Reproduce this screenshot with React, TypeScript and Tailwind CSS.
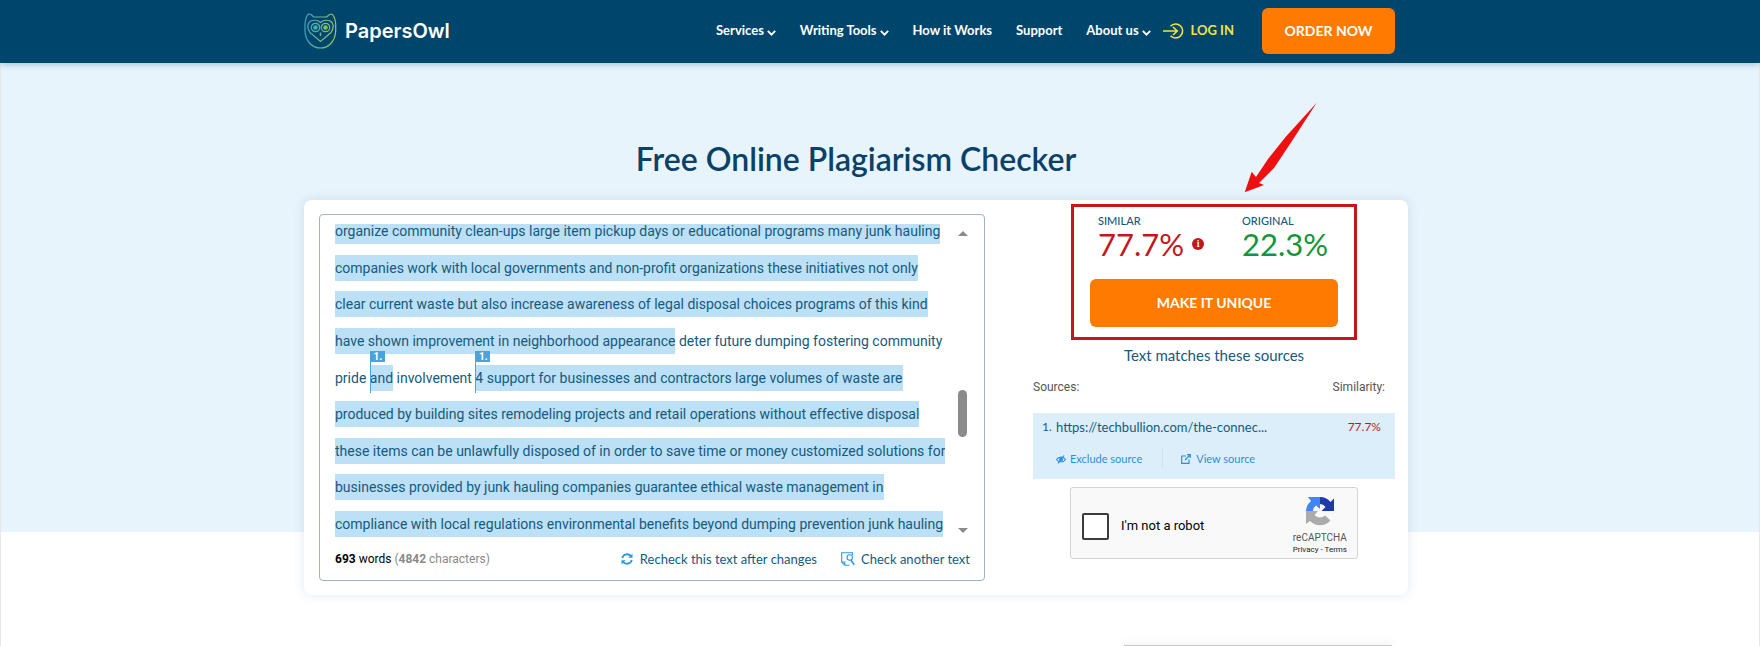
import type { ReactNode } from "react"

const navLinks = [
  { label: "Services", menu: true },
  { label: "Writing Tools", menu: true },
  { label: "How it Works", menu: false },
  { label: "Support", menu: false },
  { label: "About us", menu: true },
]

function OwlLogo() {
  return (
    <svg width="34" height="36" viewBox="0 0 34 36" fill="none" stroke="url(#owl)" strokeWidth="1.2" aria-hidden="true">
      <defs>
        <linearGradient id="owl" x1="0" y1="0" x2="34" y2="0" gradientUnits="userSpaceOnUse">
          <stop offset="0" stopColor="#3fa0c4" />
          <stop offset="1" stopColor="#a6c84f" />
        </linearGradient>
      </defs>
      <path d="M1 11C1.400 6.500 2.500 2.500 4.500 1C6.500 1 8.500 2.500 9.500 4H22.500C24 2.500 25.500 1 27.500 1C30 2.500 31.300 6.500 31.700 11V18C31.200 28 25 35 16.500 35C8 35 1.500 28 1 18Z" />
      <path d="M16.500 9.500C13.500 6.500 7.500 6.500 5 9.500C3 12.500 4 16.500 6 19.500L16.500 28.500L27 19.500C29 16.500 30 12.500 28 9.500C25.500 6.500 19.500 6.500 16.500 9.500Z" />
      <circle cx="11.500" cy="14.500" r="4.200" />
      <circle cx="21.500" cy="14.500" r="4.200" />
      <circle cx="11.500" cy="14.500" r="2.300" fill="#35b5a8" stroke="none" />
      <circle cx="21.500" cy="14.500" r="2.300" fill="#7cc35a" stroke="none" />
      <path d="M16.500 19.500V23" strokeWidth="1.500" />
    </svg>
  )
}

function Header() {
  return (
    <header className="relative bg-[#00466c] pr-12 shadow-[0_2px_6px_rgba(0,70,108,0.25)]">
      <div className="mx-auto flex h-[63px] max-w-[1104px] items-center justify-between pr-[13px] pb-px">
        {/* LOGO */}
        <a href="#" className="flex items-center gap-[7px] text-white">
          <OwlLogo />
          <span className="font-['Inter'] text-xl font-semibold">PapersOwl</span>
        </a>

        {/* NAVIGATION */}
        <div className="flex items-center">
          <nav className="flex items-center gap-6 text-[13px] font-bold text-white">
            {navLinks.map((link) => (
              <a key={link.label} href="#" className="flex items-center gap-[3px]">
                {link.label}
                {link.menu && (
                  <svg width="9" height="6" viewBox="0 0 9 6" fill="none" stroke="currentColor" strokeWidth="1.800" className="mt-1" aria-hidden="true">
                    <path d="M0.800 0.800L4.500 4.700L8.200 0.800" />
                  </svg>
                )}
              </a>
            ))}
          </nav>

          <a href="#" className="ml-3 flex items-center gap-[7px] text-[13px] font-bold text-[#f2e34a]">
            <svg width="21" height="16" viewBox="0 0 21 16" fill="none" stroke="currentColor" strokeWidth="1.600" aria-hidden="true">
              <path d="M7.500 3.200A7 7 0 1 1 7.500 12.800" />
              <path d="M0 8H14M10 4L14.300 8L10 12" />
            </svg>
            LOG IN
          </a>

          <button className="ml-7 h-[46px] w-[133px] rounded-md bg-[#ff7a00] text-sm font-bold text-white">
            ORDER NOW
          </button>
        </div>
      </div>
    </header>
  )
}

function Mark({ children }: { children: ReactNode }) {
  return <span className="inline-block bg-[#bce0f5]">{children}</span>
}

function SourceMark({ children }: { children: ReactNode }) {
  return (
    <span className="relative inline-block bg-[#bce0f5]">
      <span className="absolute -top-[14px] left-0 h-[42px] border-l border-[#4aa3df]">
        <span className="block h-[11px] w-[14px] bg-[#4aa3df] text-center text-[10px] leading-[11px] font-bold text-white">
          1.
        </span>
      </span>
      {children}
    </span>
  )
}

function Editor() {
  return (
    <div className="flex w-[666px] flex-col rounded border border-[#a3b1cc] pt-[9px] pr-[13px] pb-[11px] pl-[15px]">
      <div className="flex justify-between">
        <div className="flex h-[313px] flex-col justify-end overflow-hidden">
          <div className="flex h-[319px] shrink-0 flex-col justify-between font-['Roboto'] text-sm leading-[26px] whitespace-nowrap text-[#155a80]">
            <p><Mark>organize community clean-ups large item pickup days or educational programs many junk hauling</Mark></p>
            <p><Mark>companies work with local governments and non-profit organizations these initiatives not only</Mark></p>
            <p><Mark>clear current waste but also increase awareness of legal disposal choices programs of this kind</Mark></p>
            <p><Mark>have shown improvement in neighborhood appearance</Mark> deter future dumping fostering community</p>
            <p>
              pride <SourceMark>and</SourceMark> involvement{" "}
              <SourceMark>4 support for businesses and contractors large volumes of waste are</SourceMark>
            </p>
            <p><Mark>produced by building sites remodeling projects and retail operations without effective disposal</Mark></p>
            <p><Mark>these items can be unlawfully disposed of in order to save time or money customized solutions for</Mark></p>
            <p><Mark>businesses provided by junk hauling companies guarantee ethical waste management in</Mark></p>
            <p><Mark>compliance with local regulations environmental benefits beyond dumping prevention junk hauling</Mark></p>
          </div>
        </div>

        {/* SCROLLBAR */}
        <div className="flex w-[17px] flex-col items-center pt-[7px] pb-1">
          <span className="border-x-[5px] border-b-[5px] border-x-transparent border-b-[#8b8b8b]" />
          <span className="mt-[154px] h-[47px] w-[9px] rounded-full bg-[#8b8b8b]" />
          <span className="mt-auto border-x-[5px] border-t-[5px] border-x-transparent border-t-[#8b8b8b]" />
        </div>
      </div>

      <div className="mt-3 flex items-center justify-between pr-px text-[13px] leading-5 text-[#155a80]">
        <p className="font-['Roboto'] text-xs leading-5 text-[#8a8a8a]">
          <b className="text-black">693</b> <span className="text-black">words</span> (<b>4842</b> characters)
        </p>
        <div className="flex items-center gap-6">
          <button className="flex items-center gap-[7px]">
            <svg width="12" height="12" viewBox="0 0 12 12" fill="none" stroke="#2b9ad6" strokeWidth="1.800" aria-hidden="true">
              <path d="M1.200 5A5 5 0 0 1 10 3.200M10.800 7A5 5 0 0 1 2 8.800" />
              <path d="M11.500 0.500V4.700H7.300ZM0.500 11.500V7.300H4.700Z" fill="#2b9ad6" stroke="none" />
            </svg>
            Recheck this text after changes
          </button>
          <button className="flex items-center gap-[6px]">
            <svg width="14" height="14" viewBox="0 0 14 14" fill="none" stroke="#2b9ad6" strokeWidth="1.100" aria-hidden="true">
              <path d="M11.500 3V0.700H0.700V10L3.800 13.300H8.500M0.700 10H3.800V13.300" />
              <circle cx="8.700" cy="5.500" r="2.700" />
              <path d="M9.800 8L13.300 12.800" strokeWidth="1.600" />
            </svg>
            Check another text
          </button>
        </div>
      </div>
    </div>
  )
}

function Scores() {
  return (
    <div className="relative w-[286px] border-[3px] border-[#c4161c] px-4 pt-[6px] pb-[10px]">
      <div className="flex pl-2">
        <div className="w-36">
          <p className="text-[11px] leading-4 font-medium text-[#155a80]">SIMILAR</p>
          <p className="flex items-center gap-2 text-[31px] leading-[30px] text-[#c4161c]">
            77.7%
            <span className="flex h-3 w-3 items-center justify-center rounded-full bg-[#c4161c] font-serif text-[9px] leading-3 font-bold text-white">i</span>
          </p>
        </div>
        <div>
          <p className="text-[11px] leading-4 font-medium text-[#155a80]">ORIGINAL</p>
          <p className="text-[31px] leading-[30px] text-[#13963a]">22.3%</p>
        </div>
      </div>
      <button className="mt-5 h-12 w-full rounded-md bg-[#ff7a00] text-sm font-bold text-white">
        MAKE IT UNIQUE
      </button>

      {/* ARROW */}
      <svg className="absolute -top-[106px] left-[168px]" width="78" height="94" viewBox="0 0 78 94" fill="#ee0f10" aria-hidden="true">
        <path d="M74.700 1.700L44 35.500L26 58L14 76L9.700 70.700L2.700 91.300L22 84L17 82L32 67L50 40Z" />
      </svg>
    </div>
  )
}

function Captcha() {
  return (
    <div className="mt-2 flex w-[288px] items-center justify-between rounded-[3px] border border-[#d3d3d3] bg-[#f9f9f9] pt-2 pr-[10px] pb-[2px] pl-[11px] font-['Roboto']">
      <label className="flex items-center gap-3 text-[13px] text-black">
        <input type="checkbox" className="h-[27px] w-[27px] appearance-none rounded-[2px] border-2 border-[#3c3c3c] bg-white" />
        I'm not a robot
      </label>
      <div className="flex flex-col items-center text-[#555]">
        <svg width="30" height="30" viewBox="0 0 30 30" aria-hidden="true">
          <path d="M15 1A14 14 0 0 1 25.500 6L29 2.500V15H16.500L20.500 11A7.500 7.500 0 0 0 15 8Z" fill="#1c3aa9" />
          <path d="M1 15A14 14 0 0 1 6 5L3 1H15V13L11 9.500A7.500 7.500 0 0 0 8 15Z" fill="#4285f4" />
          <path d="M1 15H13L9.500 19A7.500 7.500 0 0 0 20 19.500L25.500 24.500A14 14 0 0 1 5 25L1 28Z" fill="#ababab" />
        </svg>
        <span className="mt-[6px] text-[10px] leading-3">reCAPTCHA</span>
        <span className="text-[8px] leading-3 text-[#222]">
          <a href="#">Privacy</a> - <a href="#">Terms</a>
        </span>
      </div>
    </div>
  )
}

function Results() {
  return (
    <div className="flex w-[362px] flex-col items-center">
      <Scores />
      <p className="mt-[3px] text-[15px] leading-6 text-[#155a80]">Text matches these sources</p>

      <div className="mt-2 flex w-full justify-between pr-[10px] font-['Roboto'] text-xs leading-6 text-[#555]">
        <span>Sources:</span>
        <span>Similarity:</span>
      </div>

      <div className="mt-[14px] w-full bg-[#dceefa] pt-1 pr-[14px] pb-[10px] pl-[9px]">
        <div className="flex text-[13px] leading-5 text-[#155a80]">
          <span className="w-[14px] text-xs leading-5">1.</span>
          <a href="#">https://techbullion.com/the-connec...</a>
          <span className="ml-auto text-xs leading-5 text-[#c4161c]">77.7%</span>
        </div>
        <div className="mt-3 flex items-center pl-[14px] text-[11px] leading-5 text-[#2f8fd8]">
          <button className="flex items-center gap-1 border-r border-[#cfe3f1] pr-5">
            <svg width="10" height="9" viewBox="0 0 10 9" fill="none" stroke="currentColor" strokeWidth="1.200" aria-hidden="true">
              <path d="M0.600 4.500C2.500 1.200 7.500 1.200 9.400 4.500C7.500 7.800 2.500 7.800 0.600 4.500Z" />
              <circle cx="5" cy="4.500" r="1.300" fill="currentColor" />
              <path d="M2 8.500L8 0.500" />
            </svg>
            Exclude source
          </button>
          <a href="#" className="ml-[18px] flex items-center gap-[5px]">
            <svg width="10" height="10" viewBox="0 0 10 10" fill="none" stroke="currentColor" strokeWidth="1.200" aria-hidden="true">
              <path d="M5 2H0.700V9.300H8V5.500M4 6L9 1M6 0.700H9.300V4" />
            </svg>
            View source
          </a>
        </div>
      </div>

      <Captcha />
    </div>
  )
}

export default function App() {
  return (
    <div className="font-['Lato',sans-serif]">
      <Header />
      <main className="border-x border-b border-[#e3e8eb] bg-linear-to-b from-[#e7f4fc] from-[469px] to-white to-[469px] pr-12">
        <h1 className="pt-[74px] pb-[19px] text-center text-[32px] leading-[44px] font-semibold text-[#0a4168]">
          Free Online Plagiarism Checker
        </h1>
        <div className="mx-auto flex max-w-[1104px] justify-between rounded-lg bg-white pt-[14px] pr-[13px] pb-[14px] pl-[15px] shadow-[0_0_12px_rgba(0,60,100,0.12)]">
          <Editor />
          <div className="-mt-[10px]">
            <Results />
          </div>
        </div>

        {/* top edge of the next panel */}
        <div className="mx-auto flex h-[51px] max-w-[1104px] items-end justify-end overflow-hidden pt-10 pr-4">
          <div className="h-px w-[268px] bg-[#c8c8c8] shadow-[0_0_8px_rgba(0,0,0,0.35)]" />
        </div>
      </main>
    </div>
  )
}
